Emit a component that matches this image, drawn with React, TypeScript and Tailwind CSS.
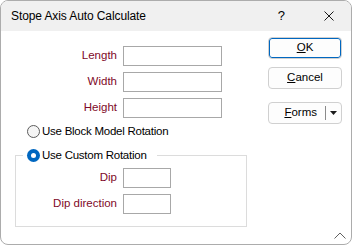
import { useState } from 'react';

const uiFont = "font-['Liberation_Sans',Arial,sans-serif]";
const labelClass = "text-right text-[11.5px] leading-none text-[#800a28] font-['Liberation_Sans',Arial,sans-serif]";
const inputClass = "h-[20px] border border-[#a8a8a8] bg-white px-1 text-[11px] outline-none";
const buttonClass = "flex h-[22px] w-full items-center justify-center rounded-[4px] border border-[#d0d0d0] bg-[#fdfdfd] text-[11.5px] text-black";
const radioText = "flex items-center gap-[2px] text-[11.5px] tracking-[-0.25px] text-black";

function Radio({ checked }: { checked: boolean }) {
    if (checked) {
        return (
            <span className="flex h-[13px] w-[13px] items-center justify-center rounded-full bg-[#0067c0]">
                <span className="h-[5px] w-[5px] rounded-full bg-white" />
            </span>
        );
    }
    return <span className="h-[13px] w-[13px] rounded-full border border-[#5c5c5c] bg-[#f5f5f5]" />;
}

export default function App() {
    const [mode, setMode] = useState<'block' | 'custom'>('custom');

    return (
        <div className={`flex h-[245px] w-[352px] flex-col overflow-hidden rounded-[8px] border border-[#acacac] bg-white ${uiFont}`}>
            {/* title bar */}
            <div className="flex h-[30px] shrink-0 items-center bg-[#f0f0f0]">
                <span className="pl-[10px] text-[12px] tracking-[-0.1px] text-black">Stope Axis Auto Calculate</span>
                <span className="ml-auto mr-[39px] text-[13px] text-black">?</span>
                <svg width="10" height="10" viewBox="0 0 10 10" className="mr-[17px]">
                    <path d="M0.5 0.5 L9.5 9.5 M9.5 0.5 L0.5 9.5" stroke="#1a1a1a" strokeWidth="1" />
                </svg>
            </div>

            <div className="relative flex flex-1">
                <div className="flex-1 pt-[15px]">
                    <div className="flex flex-col gap-[6px]">
                        {['Length', 'Width', 'Height'].map((label) => (
                            <div key={label} className="flex items-center">
                                <label className={`w-[116px] ${labelClass}`}>{label}</label>
                                <input className={`ml-[6px] w-[99px] ${inputClass}`} />
                            </div>
                        ))}
                    </div>

                    <button
                        type="button"
                        onClick={() => setMode('block')}
                        className={`ml-[26px] mt-[7px] leading-[13px] ${radioText}`}
                    >
                        <Radio checked={mode === 'block'} />
                        Use Block Model Rotation
                    </button>

                    <fieldset className="ml-[14px] mt-[9px] w-[232px] border border-[#dcdcdc] px-[7px] pb-[12px]">
                        <legend className="pl-[4px] pr-[10px]">
                            <button
                                type="button"
                                onClick={() => setMode('custom')}
                                className={`leading-[16px] ${radioText}`}
                            >
                                <Radio checked={mode === 'custom'} />
                                Use Custom Rotation
                            </button>
                        </legend>
                        <div className="flex flex-col gap-[6px] pt-[5px]">
                            {['Dip', 'Dip direction'].map((label) => (
                                <div key={label} className="flex items-center">
                                    <label className={`w-[94px] ${labelClass}`}>{label}</label>
                                    <input className={`ml-[6px] w-[48px] ${inputClass}`} />
                                </div>
                            ))}
                        </div>
                    </fieldset>
                </div>

                <div className="mr-[9px] flex w-[74px] flex-col pt-[6px]">
                    <button type="button" className={`${buttonClass} border-[#0067c0] shadow-[inset_0_0_0_1px_#0067c0]`}>
                        <span><span className="underline">O</span>K</span>
                    </button>
                    <button type="button" className={`${buttonClass} mt-[8px]`}>
                        <span><span className="underline">C</span>ancel</span>
                    </button>
                    <div className={`${buttonClass} mt-[13px] justify-end`}>
                        <span className="pr-[8px]"><span className="underline">F</span>orms</span>
                        <span className="h-[14px] w-px bg-[#8a8a8a]" />
                        <svg width="7" height="4" viewBox="0 0 7 4" className="mx-[4px]">
                            <path d="M0 0 H7 L3.5 4 Z" fill="#1a1a1a" />
                        </svg>
                    </div>
                </div>

                {/* size grip */}
                <svg width="12" height="7" viewBox="0 0 12 7" className="absolute bottom-[5px] right-[5px]">
                    <path d="M0.5 6.5 L6 1 L11.5 6.5" stroke="#606060" strokeWidth="1" fill="none" />
                </svg>
            </div>
        </div>
    );
}
